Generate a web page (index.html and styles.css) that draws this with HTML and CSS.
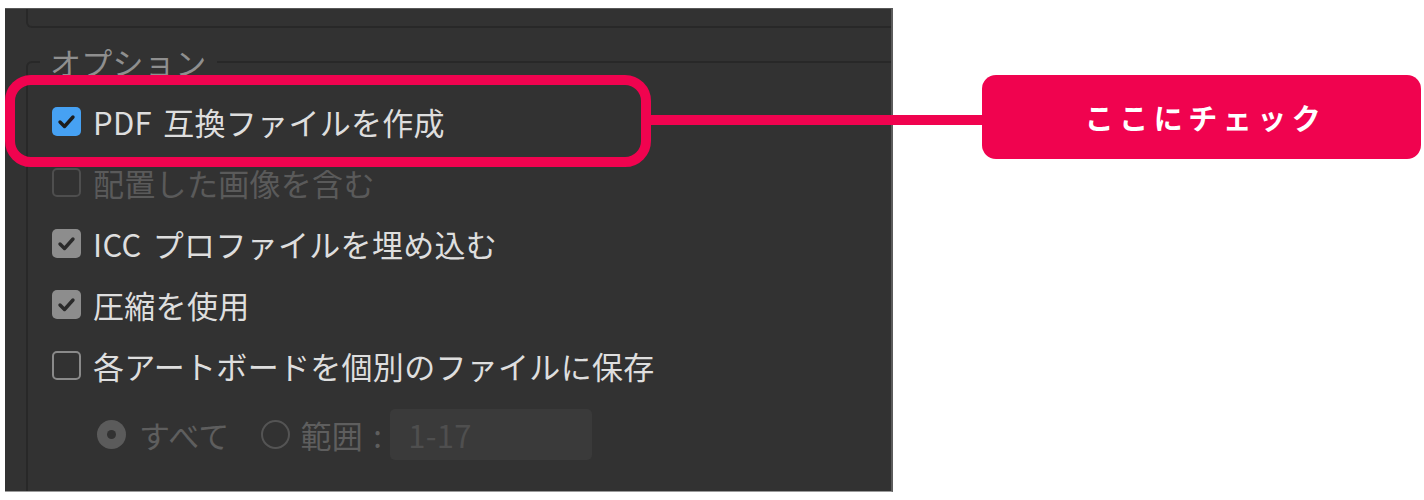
FILE: index.html
```html
<!DOCTYPE html>
<html lang="ja">
<head>
<meta charset="utf-8">
<title>オプション</title>
<link rel="stylesheet" href="styles.css">
</head>
<body>
<div class="stage">
  <div class="panel">
    <div class="topbox"></div>
    <fieldset class="options">
      <legend>オプション</legend>
      <div class="row">
        <span class="box box-blue"><svg viewBox="0 0 29 29" width="29" height="29"><path d="M8 15 L12.5 19.5 L21 10" fill="none" stroke="#1d1d1d" stroke-width="3.4" stroke-linecap="round" stroke-linejoin="round"/></svg></span>
        <span class="text">PDF 互換ファイルを作成</span>
      </div>
      <div class="row disabled">
        <span class="box box-off-dim"></span>
        <span class="text">配置した画像を含む</span>
      </div>
      <div class="row">
        <span class="box box-gray"><svg viewBox="0 0 29 29" width="29" height="29"><path d="M8 15 L12.5 19.5 L21 10" fill="none" stroke="#2a2a2a" stroke-width="3.4" stroke-linecap="round" stroke-linejoin="round"/></svg></span>
        <span class="text">ICC プロファイルを埋め込む</span>
      </div>
      <div class="row">
        <span class="box box-gray"><svg viewBox="0 0 29 29" width="29" height="29"><path d="M8 15 L12.5 19.5 L21 10" fill="none" stroke="#2a2a2a" stroke-width="3.4" stroke-linecap="round" stroke-linejoin="round"/></svg></span>
        <span class="text">圧縮を使用</span>
      </div>
      <div class="row">
        <span class="box box-off"></span>
        <span class="text">各アートボードを個別のファイルに保存</span>
      </div>
      <div class="radio-row">
        <span class="radio radio-on"></span>
        <span class="rtext">すべて</span>
        <span class="radio radio-off"></span>
        <span class="rtext">範囲 :</span>
        <span class="range">1-17</span>
      </div>
    </fieldset>
  </div>
  <div class="highlight"></div>
  <div class="connector"></div>
  <div class="callout">ここにチェック</div>
</div>
</body>
</html>
```
FILE: styles.css
```css
html, body {
  margin: 0;
  padding: 0;
  background: #ffffff;
}
body {
  font-family: "Noto Sans CJK JP", "Noto Sans", sans-serif;
}
.stage {
  position: relative;
  width: 1424px;
  height: 500px;
  padding: 8px 0 0 5px;
  box-sizing: border-box;
}
.panel {
  width: 865px;
  height: 482px;
  background: #323232;
  border-top: 1px solid #575757;
  border-right: 2px solid #5c5c5c;
  border-bottom: 1px solid #9a9a9a;
  padding-left: 21px;
  box-sizing: content-box;
  overflow: hidden;
}
.topbox {
  height: 17px;
  border: 2px solid #282828;
  border-top: none;
  border-radius: 0 0 6px 6px;
  margin-right: -40px;
}
.options {
  margin: 14px -40px 0 0;
  border: 2px solid #282828;
  border-radius: 6px;
  padding: 9px 0 120px 24px;
  min-width: 0;
}
.options legend {
  padding: 0 10px;
  margin-left: -12px;
  line-height: 40px;
  font-size: 31px;
  letter-spacing: 0.3px;
  color: #8f8f8f;
}
.row {
  display: flex;
  align-items: center;
  height: 61px;
  font-size: 31px;
  line-height: 1;
  letter-spacing: 0.3px;
  word-spacing: 4px;
  color: #dedede;
}
.row.disabled {
  color: #5a5a5a;
}
.box {
  width: 29px;
  height: 29px;
  flex: none;
  box-sizing: border-box;
  border-radius: 5px;
  margin-right: 12px;
  display: flex;
}
.box svg {
  display: block;
}
.box-blue {
  background: #46a1f3;
}
.box-gray {
  background: #8d8d8d;
}
.box-off {
  border: 2px solid #8a8a8a;
}
.box-off-dim {
  border: 2px solid #4e4e4e;
}
.radio-row {
  display: flex;
  align-items: center;
  height: 51px;
  margin-top: 13px;
  padding-left: 45px;
  font-size: 31px;
  line-height: 1;
  letter-spacing: 0.3px;
  word-spacing: 3px;
  color: #5e5e5e;
}
.radio {
  width: 29px;
  height: 29px;
  flex: none;
  box-sizing: border-box;
  border-radius: 50%;
  position: relative;
}
.radio-on {
  background: #5b5b5b;
  margin-right: 13px;
}
.radio-on::after {
  content: "";
  position: absolute;
  left: 10px;
  top: 10px;
  width: 9px;
  height: 9px;
  border-radius: 50%;
  background: #323232;
}
.radio-off {
  border: 2px solid #545454;
  margin-left: 31px;
  margin-right: 11px;
}
.range {
  margin-left: 8px;
  width: 202px;
  height: 51px;
  box-sizing: border-box;
  padding-left: 18px;
  display: flex;
  align-items: center;
  background: #3a3a3a;
  border-radius: 5px;
  color: #4f4f4f;
}
.highlight {
  position: absolute;
  left: 5px;
  top: 75px;
  width: 646px;
  height: 92px;
  box-sizing: border-box;
  border: 10px solid #f0034f;
  border-radius: 26px;
}
.connector {
  position: absolute;
  left: 650px;
  top: 115px;
  width: 334px;
  height: 10px;
  background: #f0034f;
}
.callout {
  position: absolute;
  left: 982px;
  top: 75px;
  width: 439px;
  height: 84px;
  border-radius: 14px;
  background: #f0034f;
  color: #ffffff;
  display: flex;
  align-items: center;
  justify-content: center;
  font-size: 29px;
  font-weight: 700;
  letter-spacing: 5.5px;
  padding-left: 8px;
  box-sizing: border-box;
}
```
